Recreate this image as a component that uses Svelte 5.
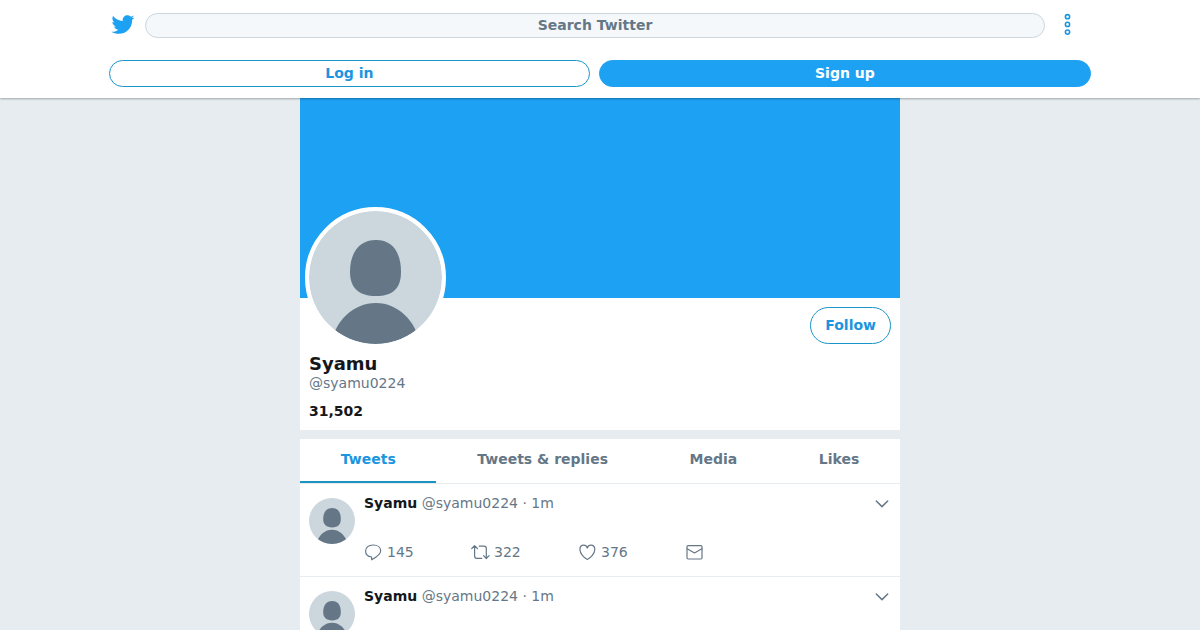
<script lang="ts">
	const user = { name: 'Syamu', handle: '@syamu0224', followers: '31,502' };

	const tabs = ['Tweets', 'Tweets & replies', 'Media', 'Likes'];
	let activeTab = $state('Tweets');

	const tweets = [
		{ id: 1, age: '1m', replies: 145, retweets: 322, likes: 376 },
		{ id: 2, age: '1m', replies: 145, retweets: 322, likes: 376 }
	];
</script>

{#snippet avatar()}
	<svg class="face" viewBox="0 0 133 133" aria-hidden="true">
		<rect width="133" height="133" fill="#ccd6dd" />
		<path
			d="M67 29C84 29 92 42 92 61C92 77 84 85 67 85C50 85 41 77 41 61C41 42 50 29 67 29Z"
			fill="#657786"
		/>
		<path d="M22 133C26 110 44 92 67 92C89 92 107 110 111 133Z" fill="#657786" />
	</svg>
{/snippet}

<header>
	<div class="bar">
		<div class="top">
			<a class="logo" href="#home" aria-label="Twitter">
				<svg viewBox="0 0 24 24" width="24" height="23" fill="#1da1f2" aria-hidden="true">
					<path
						d="M23.954 4.569c-.885.389-1.83.654-2.825.775 1.014-.611 1.794-1.574 2.163-2.723-.951.555-2.005.959-3.127 1.184-.896-.959-2.173-1.559-3.591-1.559-2.717 0-4.92 2.203-4.92 4.917 0 .39.045.765.127 1.124C7.691 8.094 4.066 6.13 1.64 3.161c-.427.722-.666 1.561-.666 2.475 0 1.71.87 3.213 2.188 4.096-.807-.026-1.566-.248-2.228-.616v.061c0 2.385 1.693 4.374 3.946 4.827-.413.111-.849.171-1.296.171-.314 0-.615-.03-.916-.086.631 1.953 2.445 3.377 4.604 3.417-1.68 1.319-3.809 2.105-6.102 2.105-.39 0-.779-.023-1.17-.067 2.189 1.394 4.768 2.209 7.557 2.209 9.054 0 13.999-7.496 13.999-13.986 0-.209 0-.42-.015-.63.961-.689 1.8-1.56 2.46-2.548l-.047-.02z"
					/>
				</svg>
			</a>
			<a class="search" href="#search">Search Twitter</a>
			<button class="more" aria-label="More">
				<svg viewBox="0 0 10 24" width="10" height="24" fill="none" stroke="#1b95e0" stroke-width="1.6">
					<circle cx="4.5" cy="3.7" r="2.1" />
					<circle cx="4.5" cy="11.4" r="2.1" />
					<circle cx="4.5" cy="19.1" r="2.1" />
				</svg>
			</button>
		</div>
		<div class="auth">
			<a class="pill" href="#login">Log in</a>
			<a class="pill filled" href="#signup">Sign up</a>
		</div>
	</div>
</header>

<main>
	<section class="profile">
		<div class="banner"></div>
		<div class="info">
			<div class="row">
				<div class="photo">{@render avatar()}</div>
				<button class="follow">Follow</button>
			</div>
			<h1>{user.name}</h1>
			<div class="handle">{user.handle}</div>
			<div class="followers">{user.followers}</div>
		</div>
	</section>

	<section class="timeline">
		<nav>
			{#each tabs as tab (tab)}
				<button class:active={tab === activeTab} onclick={() => (activeTab = tab)}>{tab}</button>
			{/each}
		</nav>

		{#each tweets as tweet (tweet.id)}
			<article>
				<div class="thumb">{@render avatar()}</div>
				<div class="body">
					<div class="meta">
						<span><strong>{user.name}</strong> {user.handle} · {tweet.age}</span>
						<button aria-label="Tweet options">
							<svg class="icon chevron" viewBox="0 0 18 18" aria-hidden="true">
								<path d="M3.3 7L9 12.6L14.7 7" />
							</svg>
						</button>
					</div>
					<div class="actions">
						<button aria-label="Reply">
							<svg class="icon" viewBox="0 0 18 18" aria-hidden="true">
								<path
									d="M7.6 14C4 13.6 1.6 11.2 1.6 8C1.6 4.4 4.6 2 9.2 2C13.8 2 16.7 4.4 16.7 7.8C16.7 11.4 12.4 14.2 7.7 16.8Z"
								/>
							</svg>
							{tweet.replies}
						</button>
						<button class="retweet" aria-label="Retweet">
							<svg class="icon wide" viewBox="0 0 20 18" aria-hidden="true">
								<path d="M.8 5.5L3.6 2.7L6.4 5.5M3.6 2.7V13Q3.6 15.3 5.9 15.3H10.8" />
								<path d="M8.2 3.2H13Q15.3 3.2 15.3 5.5V15.5M12.5 12.7L15.3 15.5L18.1 12.7" />
							</svg>
							{tweet.retweets}
						</button>
						<button aria-label="Like">
							<svg class="icon" viewBox="0 0 18 18" aria-hidden="true">
								<path
									d="M9.3 16.5C6.6 15.3 1.9 10.8 1.9 6.6C1.9 3.9 3.5 2.2 5.7 2.2C7.4 2.2 8.7 3.2 9.3 5C9.9 3.2 11.2 2.2 12.9 2.2C15.1 2.2 16.8 3.9 16.8 6.6C16.8 10.8 12.1 15.3 9.3 16.5Z"
								/>
							</svg>
							{tweet.likes}
						</button>
						<button aria-label="Direct message">
							<svg class="icon" viewBox="0 0 18 18" aria-hidden="true">
								<rect x="2" y="2.6" width="15" height="13.4" rx="1.2" />
								<path d="M2.2 5.7L9.5 10L16.8 5.7" />
							</svg>
						</button>
					</div>
				</div>
			</article>
		{/each}
	</section>
</main>

<style>
	:global(body) {
		margin: 0;
		background: #e6ecf0;
		color: #14171a;
		font: 14px/18px 'DejaVu Sans', sans-serif;
	}
	a {
		text-decoration: none;
	}
	button {
		padding: 0;
		border: 0;
		background: none;
		color: inherit;
		font: inherit;
		cursor: pointer;
	}
	svg {
		display: block;
	}

	header {
		position: relative;
		z-index: 1;
		background: #fff;
		box-shadow: 0 1px 2px rgba(0, 0, 0, 0.3);
	}
	.bar {
		box-sizing: border-box;
		max-width: 1000px;
		margin: 0 auto;
		padding: 13px 9px 11px;
	}
	.top {
		display: flex;
		align-items: flex-start;
		height: 25px;
		margin-bottom: 22px;
	}
	.logo {
		width: 28px;
		margin-right: 8px;
	}
	.logo svg {
		margin: 0 auto;
	}
	.search {
		flex: 1;
		border: 1px solid #ccd6dd;
		border-radius: 13px;
		background: #f5f8fa;
		color: #657786;
		font-weight: bold;
		line-height: 23px;
		text-align: center;
	}
	.more {
		display: flex;
		justify-content: center;
		width: 46px;
	}
	.auth {
		display: flex;
		gap: 9px;
	}
	.pill {
		flex: 1 1 auto;
		border: 1px solid #1b95c8;
		border-radius: 14px;
		color: #1b95e0;
		font-weight: bold;
		line-height: 25px;
		text-align: center;
	}
	.filled {
		border-color: #1da1f2;
		background: #1da1f2;
		color: #fff;
	}

	main {
		max-width: 600px;
		margin: 0 auto;
	}
	.profile,
	.timeline {
		background: #fff;
	}
	.profile {
		margin-bottom: 9px;
	}
	.banner {
		height: 200px;
		background: #1da1f2;
	}
	.info {
		padding: 9px 9px 10px;
	}
	.row {
		display: flex;
		align-items: flex-start;
		justify-content: space-between;
		margin-bottom: 5px;
	}
	.photo {
		width: 133px;
		height: 133px;
		margin: -100px 0 0 -4px;
		border: 4px solid #fff;
		border-radius: 50%;
		overflow: hidden;
		background: #fff;
	}
	.face {
		width: 100%;
		height: 100%;
		border-radius: 50%;
	}
	.follow {
		padding: 0 14px;
		border: 1px solid #1b95c8;
		border-radius: 19px;
		color: #1b95e0;
		font-weight: bold;
		line-height: 35px;
	}
	h1 {
		margin: 0;
		font-size: 18px;
		line-height: 21px;
	}
	.handle {
		color: #657786;
	}
	.followers {
		margin-top: 10px;
		font-weight: bold;
	}

	nav {
		display: flex;
		border-bottom: 1px solid #e6ecf0;
	}
	nav button {
		flex: 1 1 auto;
		padding-bottom: 2px;
		border-bottom: 2px solid transparent;
		color: #657786;
		font-weight: bold;
		line-height: 40px;
	}
	nav .active {
		border-color: #1b95c0;
		color: #1b95e0;
	}

	article {
		display: flex;
		gap: 9px;
		padding: 10px 9px 15px;
		border-bottom: 1px solid #e6ecf0;
	}
	.thumb {
		width: 46px;
		height: 46px;
		margin-top: 4px;
	}
	.body {
		flex: 1;
		color: #657786;
	}
	.meta {
		display: flex;
		justify-content: space-between;
		margin-bottom: 31px;
	}
	.meta strong {
		color: #14171a;
	}
	.actions {
		display: flex;
		max-width: 428px;
	}
	.actions button {
		display: flex;
		flex: 1;
		align-items: center;
		gap: 5px;
	}
	.actions .retweet {
		gap: 3px;
	}
	.icon {
		width: 18px;
		height: 18px;
		fill: none;
		stroke: #657786;
		stroke-width: 1.2;
		stroke-linecap: round;
		stroke-linejoin: round;
	}
	.wide {
		width: 20px;
	}
	.chevron {
		stroke-width: 1.5;
	}
</style>
